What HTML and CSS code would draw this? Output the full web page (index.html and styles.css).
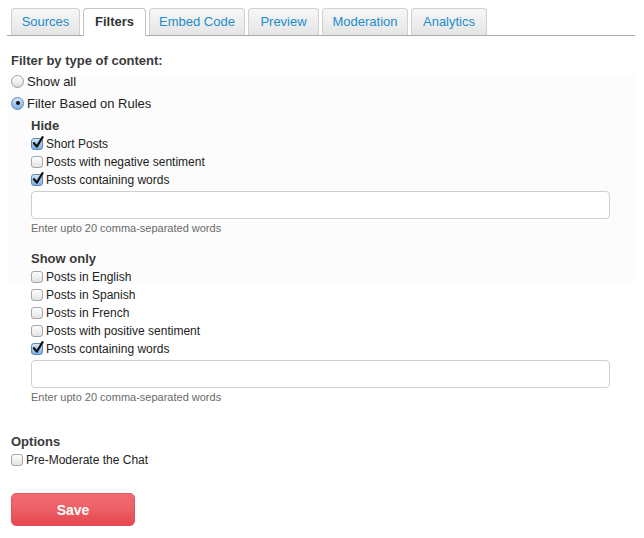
FILE: index.html
```html
<!DOCTYPE html>
<html>
<head>
<meta charset="utf-8">
<link rel="stylesheet" href="styles.css">
</head>
<body>
<div class="page">
  <ul class="tabs">
    <li class="tab t-sources">Sources</li>
    <li class="tab t-filters active">Filters</li>
    <li class="tab t-embed">Embed Code</li>
    <li class="tab t-preview">Preview</li>
    <li class="tab t-moderation">Moderation</li>
    <li class="tab t-analytics">Analytics</li>
  </ul>
  <div class="content">
    <div class="heading">Filter by type of content:</div>
    <label class="radio-row"><span class="radio"></span>Show all</label>
    <label class="radio-row"><span class="radio on"><span class="dot"></span></span>Filter Based on Rules</label>
    <div class="rules">
      <div class="subhead">Hide</div>
      <label class="check-row"><span class="cb on"><svg viewBox="0 0 14 14" width="14" height="14"><path d="M3 7.2 L5.8 10.6 L11.6 1.2" fill="none" stroke="#111" stroke-width="2.2" stroke-linecap="round" stroke-linejoin="round"/></svg></span>Short Posts</label>
      <label class="check-row"><span class="cb"></span>Posts with negative sentiment</label>
      <label class="check-row"><span class="cb on"><svg viewBox="0 0 14 14" width="14" height="14"><path d="M3 7.2 L5.8 10.6 L11.6 1.2" fill="none" stroke="#111" stroke-width="2.2" stroke-linecap="round" stroke-linejoin="round"/></svg></span>Posts containing words</label>
      <div class="field"></div>
      <div class="help">Enter upto 20 comma-separated words</div>

      <div class="subhead gap">Show only</div>
      <label class="check-row"><span class="cb"></span>Posts in English</label>
      <label class="check-row"><span class="cb"></span>Posts in Spanish</label>
      <label class="check-row"><span class="cb"></span>Posts in French</label>
      <label class="check-row"><span class="cb"></span>Posts with positive sentiment</label>
      <label class="check-row"><span class="cb on"><svg viewBox="0 0 14 14" width="14" height="14"><path d="M3 7.2 L5.8 10.6 L11.6 1.2" fill="none" stroke="#111" stroke-width="2.2" stroke-linecap="round" stroke-linejoin="round"/></svg></span>Posts containing words</label>
      <div class="field"></div>
      <div class="help">Enter upto 20 comma-separated words</div>
    </div>

    <div class="subhead options">Options</div>
    <label class="check-row"><span class="cb"></span>Pre-Moderate the Chat</label>

    <button class="save">Save</button>
  </div>
</div>
</body>
</html>
```
FILE: styles.css
```css
* { box-sizing: border-box; }
html, body { margin: 0; padding: 0; background: #fff; }
body {
  font-family: "Liberation Sans", Arial, Helvetica, sans-serif;
  color: #222;
}
.page {
  width: 635px;
  padding: 8px 0 0 7px;
}
.tabs {
  list-style: none;
  margin: 0;
  padding: 0 0 0 4px;
  display: flex;
  gap: 3px;
  border-bottom: 1px solid #ababab;
  height: 28px;
}
.tab {
  height: 27px;
  line-height: 26px;
  padding: 0;
  text-align: center;
  font-size: 13px;
  color: #1b8dcc;
  border: 1px solid #d0d0d0;
  border-bottom: none;
  border-radius: 4px 4px 0 0;
  background: linear-gradient(to bottom, #f7f7f7 0%, #ececec 60%, #e4e4e4 100%);
  flex: none;
}
.t-sources { width: 69px; }
.t-filters { width: 63px; }
.t-embed { width: 96px; }
.t-preview { width: 71px; }
.t-moderation { width: 86px; }
.t-analytics { width: 76px; }
.tab.active {
  background: #fff;
  color: #333;
  font-weight: bold;
  height: 28px;
  border-color: #c4c4c4;
}
.content {
  padding: 16px 0 0 4px;
  background: linear-gradient(to bottom, #fff 0, #fff 39px, #fcfcfc 39px, #fcfcfc 247px, #fff 247px);
}
.heading, .subhead {
  font-size: 13px;
  font-weight: bold;
  color: #3a3a3a;
  line-height: 18px;
}
.radio-row {
  display: flex;
  align-items: center;
  height: 22px;
  font-size: 13px;
  color: #222;
}
.radio {
  width: 13px;
  height: 13px;
  border-radius: 50%;
  border: 1px solid #9c9c9c;
  background: linear-gradient(to bottom, #fff 0%, #ececec 60%, #dcdcdc 100%);
  margin-right: 3px;
  display: flex;
  align-items: center;
  justify-content: center;
  flex: none;
}
.radio.on {
  border-color: #5b87b8;
  background: linear-gradient(to bottom, #d4e6f8 0%, #a4c8ee 50%, #7fb2e8 100%);
}
.dot {
  width: 4px;
  height: 4px;
  border-radius: 50%;
  background: #111;
}
.rules {
  padding-left: 20px;
  padding-top: 3px;
}
.subhead.gap { margin-top: 15px; }
.subhead.options { margin-top: 29px; }
.check-row {
  display: flex;
  align-items: center;
  height: 18px;
  font-size: 12px;
  color: #222;
}
.cb {
  position: relative;
  width: 12px;
  height: 12px;
  border: 1px solid #a6a6a6;
  border-radius: 3px;
  background: linear-gradient(to bottom, #fdfdfd 0%, #eeeeee 60%, #e2e2e2 100%);
  margin-right: 3px;
  flex: none;
}
.cb.on {
  border-color: #5b87b8;
  background: linear-gradient(to bottom, #d4e6f8 0%, #a4c8ee 50%, #7fb2e8 100%);
}
.cb svg {
  position: absolute;
  left: -1px;
  top: -3px;
}
.field {
  margin-top: 2px;
  width: 579px;
  height: 28px;
  border: 1px solid #cfcfcf;
  border-radius: 4px;
  background: #fff;
}
.help {
  margin-top: 2px;
  font-size: 11px;
  line-height: 14px;
  color: #6a6a6a;
}
.save {
  display: block;
  margin-top: 24px;
  width: 124px;
  height: 33px;
  border: 1px solid #e4535a;
  border-radius: 5px;
  background: linear-gradient(to bottom, #f06d72 0%, #ec5f65 50%, #e5464d 100%);
  color: #fff;
  font-family: "Liberation Sans", Arial, Helvetica, sans-serif;
  font-size: 14px;
  font-weight: bold;
  padding: 0;
}
```
